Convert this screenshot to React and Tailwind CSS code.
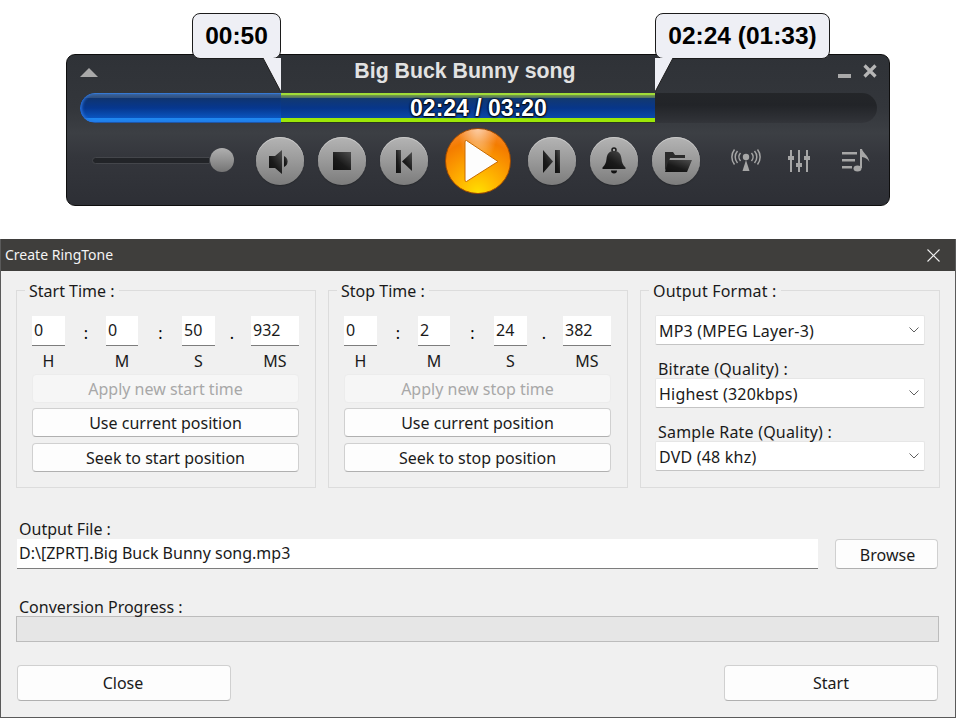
const Glyph = ({ children, size = 48 }) => (
  <svg width={size} height={size} viewBox={`0 0 ${size} ${size}`} className="block">
    <defs>
      <linearGradient id="gl" x1="0.9" y1="0" x2="0.1" y2="1">
        <stop offset="0" stopColor="#4a4a4a" />
        <stop offset="0.6" stopColor="#1a1a1a" />
        <stop offset="1" stopColor="#111111" />
      </linearGradient>
    </defs>
    {children}
  </svg>
);

const RoundButton = ({ children }) => (
  <div className="h-12 w-12 shrink-0 rounded-full bg-[linear-gradient(#b4b4b4,#9c9c9c_45%,#7c7c7c)] shadow-[inset_0_1px_0_#c8c8c8,0_1px_1px_#26282c]">
    <Glyph>{children}</Glyph>
  </div>
);

const Tooltip = ({ children, width, side }) => (
  <div className={`relative h-[46px] ${width} rounded-lg border border-[#1c1c1c] bg-[#eeeff5] flex items-center justify-center font-['Liberation_Sans'] font-bold text-[24.5px] text-black`}>
    {children}
    {side === "left" ? (
      <svg width="18" height="35" viewBox="0 0 18 35" className="absolute right-[-1px] top-[44px]">
        <path d="M0 0 L18 34 L18 0 Z" fill="#eeeff5" />
        <path d="M0 0 L18 34" fill="none" stroke="#1c1c1c" strokeWidth="1" />
      </svg>
    ) : (
      <svg width="18" height="35" viewBox="0 0 18 35" className="absolute left-[-1px] top-[44px]">
        <path d="M18 0 L0 34 L0 0 Z" fill="#eeeff5" />
        <path d="M18 0 L0 34" fill="none" stroke="#1c1c1c" strokeWidth="1" />
      </svg>
    )}
  </div>
);

const Player = () => (
  <div className="relative ml-[66px] mt-[54px] h-[152px] w-[824px] rounded-[9px] border border-[#0e0e0e] bg-[linear-gradient(#2f3237,#33363b_35%,#3c3f44_52%,#34363c_68%,#2d2f35)] px-[13px]">
    <div className="absolute left-[125px] top-[-42px]">
      <Tooltip width="w-[89px]" side="left">00:50</Tooltip>
    </div>
    <div className="absolute left-[588px] top-[-42px]">
      <Tooltip width="w-[175px]" side="right">02:24 (01:33)</Tooltip>
    </div>

    <div className="flex h-[38px] items-center justify-between">
      <div className="mt-[-4px] h-0 w-0 border-x-[9px] border-b-[9px] border-x-transparent border-b-[#a9a9a9]" />
      <div className="mr-[6px] mt-[-4px] font-['Liberation_Sans'] text-[21.3px] font-bold text-[#e2e2e2]">Big Buck Bunny song</div>
      <div className="mr-[-1px] mt-[-7px] flex items-end gap-[12px]">
        <div className="h-[4px] w-[13px] bg-[#a9a9a9]" />
        <svg width="14" height="14" viewBox="0 0 14 14" className="block">
          <path d="M1.5 1.5 L12.5 12.5 M12.5 1.5 L1.5 12.5" stroke="#b6b6b6" strokeWidth="3.2" />
        </svg>
      </div>
    </div>

    <div className="relative flex h-[30px] w-[797px] overflow-hidden rounded-full bg-[linear-gradient(#242629,#222428_40%,#2e3035_85%,#33353a)]">
      <div className="h-full w-[201px] rounded-l-full bg-[linear-gradient(#3f7fd0_1px,#3b6398_1px,#2d4e80_5px,#0f346f_5px,#06378f_15px,#0a55c0_25px,#2088f0_25px,#1f80ee_29px,#1a4a90_29px)] shadow-[inset_2px_0_3px_#2a70d8]" />
      <div className="h-full w-[374px] bg-[linear-gradient(#a0dc38_2px,#7a9f45_2px,#4a6c64_5px,#13396f_5px,#07368a_15px,#0a49a8_25px,#9ce808_25px,#9ce808_29px,#2a3a20_29px)]" />
      <div className="absolute inset-0 flex items-center justify-center font-['Liberation_Sans'] text-[23px] font-bold text-white [text-shadow:0_0_2px_#000,0_0_2px_#000,0_1px_2px_#000]">
        02:24 / 03:20
      </div>
    </div>

    <div className="flex h-[82px] items-center pb-[6px] pl-[12px]">
      <div className="mt-[-2px] flex w-[142px] shrink-0 items-center">
        <div className="h-[7px] w-[120px] rounded-l-full border border-[#44464b] bg-[#222428]" />
        <div className="h-6 w-6 rounded-full bg-[linear-gradient(#b0b0b0,#757575)]" />
      </div>
      <div className="ml-[22px] flex items-center gap-[14px]">
        <RoundButton>
          <path d="M13 19h6l7-6v24l-7-6h-6z" fill="url(#gl)" />
          <path d="M28 19a6 6 0 0 1 0 11z" fill="url(#gl)" />
        </RoundButton>
        <RoundButton>
          <rect x="15" y="15" width="18" height="18" fill="url(#gl)" />
        </RoundButton>
        <RoundButton>
          <rect x="16" y="13" width="5" height="23" fill="url(#gl)" />
          <path d="M32 15v19L22 24.5z" fill="url(#gl)" />
        </RoundButton>
      </div>
      <div className="mx-[17px] h-[66px] w-[66px] shrink-0 rounded-full border border-[#a34c00] bg-[radial-gradient(ellipse_at_50%_-10%,rgba(255,255,255,0.65),rgba(255,255,255,0)_45%),radial-gradient(circle_at_50%_100%,#ffe000,#ffb400_30%,#f98e00_58%,#f47c00_72%,#f98a30_92%,#e87000)]">
        <svg width="64" height="64" viewBox="0 0 64 64" className="block">
          <path d="M20.5 11.500 L52 32.500 L20.500 52.500 Q19 53 19 51 V13 Q19 11 20.500 11.500 Z" fill="#fdfdfd" stroke="#c96a00" strokeWidth="1" />
        </svg>
      </div>
      <div className="flex items-center gap-[14px]">
        <RoundButton>
          <path d="M15 13v23l10-11.500z" fill="url(#gl)" />
          <rect x="27" y="13" width="5" height="23" fill="url(#gl)" />
        </RoundButton>
        <RoundButton>
          <circle cx="24" cy="13" r="2" fill="none" stroke="#1a1a1a" strokeWidth="1.500" />
          <path d="M24 14c-5 0-7 3-7.500 8-.4 4-1.500 6-4 8.500v1.500h23v-1.500c-2.500-2.500-3.600-4.500-4-8.500-.5-5-2.500-8-7.500-8z" fill="url(#gl)" />
          <path d="M21 33.500h6a3 3 0 0 1-6 0z" fill="#111111" />
        </RoundButton>
        <RoundButton>
          <path d="M13 33V15h8l2 3h10v3H18l-2.500 10z" fill="#2b2b2b" />
          <path d="M16.500 23H40l-5 12H13z" fill="url(#gl)" />
        </RoundButton>
      </div>
      <div className="ml-[30px] flex items-center text-[#a6a6a6]">
        <svg width="32" height="24" viewBox="0 0 32 24" fill="none" stroke="currentColor" className="block">
          <circle cx="16" cy="8" r="3.200" fill="currentColor" stroke="none" />
          <path d="M16 11l3.500 11h-7z" fill="currentColor" stroke="none" />
          <path d="M10.500 4a6 6 0 0 0 0 8M21.500 4a6 6 0 0 1 0 8M7.500 2a9 9 0 0 0 0 12M24.500 2a9 9 0 0 1 0 12M4.500 .5a12 12 0 0 0 0 15M27.500 .5a12 12 0 0 1 0 15" strokeWidth="1.500" />
        </svg>
        <svg width="22" height="22" viewBox="0 0 22 22" fill="currentColor" className="ml-[26px] block">
          <rect x="2" y="0" width="2" height="22" />
          <rect x="10" y="0" width="2" height="22" />
          <rect x="18" y="0" width="2" height="22" />
          <rect x="0" y="6" width="6" height="4" />
          <rect x="8" y="13" width="6" height="4" />
          <rect x="16" y="6" width="6" height="4" />
        </svg>
        <svg width="28" height="24" viewBox="0 0 28 24" fill="currentColor" className="ml-[32px] block">
          <rect x="0" y="3" width="15" height="2.500" />
          <rect x="0" y="10" width="13" height="2.500" />
          <rect x="0" y="17" width="10" height="2.500" />
          <ellipse cx="15.500" cy="19.500" rx="4" ry="3" />
          <rect x="18" y="0" width="2" height="19" />
          <path d="M20 0c1 4 6 6 7.500 13-2-3.500-4.500-4.500-7.500-5z" />
        </svg>
      </div>
    </div>
  </div>
);

const Field = ({ w, children }) => (
  <div className={`${w} flex h-[30px] shrink-0 items-center border-b border-b-[#7d7d7d] bg-white pb-[2px] pl-[2px] text-[#1a1a1a]`}>{children}</div>
);

const Sep = ({ w, children }) => (
  <div className={`${w} shrink-0 pl-px pt-[4px] text-center`}>{children}</div>
);

const Btn = ({ children, className = "", disabled }) => (
  <div
    className={`flex items-center justify-center rounded-[4px] border ${
      disabled ? "border-[#ececec] bg-[#f6f6f6] text-[#a8a8a8]" : "border-[#d0d0d0] border-b-[#b0b0b0] bg-[#fdfdfd] text-[#1a1a1a]"
    } ${className}`}
  >
    {children}
  </div>
);

const TimeGroup = ({ title, values, apply, seek }) => (
  <fieldset className="w-[300px] border border-[#dcdcdc] px-[15px] pb-[15px] pt-[14px]">
    <legend className="ml-[-7px] px-[4px] pt-px text-[#1a1a1a]">{title}</legend>
    <div className="flex items-center">
      <Field w="w-[33px]">{values[0]}</Field>
      <Sep w="w-[41px]">:</Sep>
      <Field w="w-[32px]">{values[1]}</Field>
      <Sep w="w-[44px]">:</Sep>
      <Field w="w-[33px]">{values[2]}</Field>
      <Sep w="w-[36px] pr-[3px]">.</Sep>
      <Field w="w-[48px]">{values[3]}</Field>
    </div>
    <div className="flex h-[28px] items-center pt-px text-[#1a1a1a]">
      <div className="w-[33px] text-center">H</div>
      <div className="ml-[41px] w-[32px] text-center">M</div>
      <div className="ml-[44px] w-[33px] text-center">S</div>
      <div className="ml-[36px] w-[48px] text-center">MS</div>
    </div>
    <div className="flex w-[267px] flex-col">
      <Btn disabled className="h-[29px]">{apply}</Btn>
      <Btn className="mt-[5px] h-[29px]">Use current position</Btn>
      <Btn className="mt-[6px] h-[29px]">{seek}</Btn>
    </div>
  </fieldset>
);

const Select = ({ children }) => (
  <div className="flex h-[30px] items-center justify-between rounded-[2px] border border-[#e6e6e6] border-b-[#c4c4c4] bg-white pl-[3px] pr-[5px] text-[#1a1a1a]">
    <span className="pt-[2px]">{children}</span>
    <svg width="10" height="6" viewBox="0 0 10 6" fill="none" stroke="#606060" className="block">
      <path d="M.5 .5 L5 5 L9.500 .5" />
    </svg>
  </div>
);

const Dialog = () => (
  <div className="mt-[33px] h-[479px] w-[956px] border-x border-b border-[#5a5a5a] bg-[#f0f0f0] font-['Noto_Sans',sans-serif] text-[16px] leading-[22px]">
    <div className="flex h-[32px] items-center justify-between bg-[#3f3e3c] pl-[4px] pr-[15px] text-[14px] text-[#f4f4f4]">
      <span>Create RingTone</span>
      <svg width="13" height="13" viewBox="0 0 13 13" stroke="#f0f0f0" strokeWidth="1.100" className="block">
        <path d="M.5 .5 L12.500 12.500 M12.500 .5 L.5 12.500" />
      </svg>
    </div>
    <div className="px-[15px] pt-[8px]">
      <div className="flex gap-[12px]">
        <TimeGroup title="Start Time :" values={["0", "0", "50", "932"]} apply="Apply new start time" seek="Seek to start position" />
        <TimeGroup title="Stop Time :" values={["0", "2", "24", "382"]} apply="Apply new stop time" seek="Seek to stop position" />
        <fieldset className="w-[300px] border border-[#dcdcdc] px-[14px] pb-[16px] pt-[13px] tracking-[0.2px]">
          <legend className="ml-[-6px] px-[4px] pt-px text-[#1a1a1a]">Output Format :</legend>
          <Select>MP3 (MPEG Layer-3)</Select>
          <div className="h-[33px] pl-[3px] pt-[14px] leading-[20px] text-[#1a1a1a]">Bitrate (Quality) :</div>
          <Select>Highest (320kbps)</Select>
          <div className="h-[33px] pl-[3px] pt-[14px] leading-[20px] text-[#1a1a1a]">Sample Rate (Quality) :</div>
          <Select>DVD (48 khz)</Select>
        </fieldset>
      </div>

      <div className="mt-[30px] h-[21px] pl-[3px] text-[#1a1a1a]">Output File :</div>
      <div className="flex pl-[1px]">
        <div className="flex h-[30px] w-[801px] items-center border-b border-b-[#7d7d7d] bg-white pb-[2px] pl-[2px] text-[#1a1a1a]">D:\[ZPRT].Big Buck Bunny song.mp3</div>
        <Btn className="ml-[17px] h-[30px] w-[103px] pl-[2px] pt-[2px]">Browse</Btn>
      </div>

      <div className="mt-[27px] h-[20px] pl-[3px] text-[#1a1a1a]">Conversion Progress :</div>
      <div className="h-[26px] w-[923px] border border-[#bcbcbc] bg-[#e6e6e6]" />

      <div className="mt-[23px] flex justify-between pl-[1px] pr-[2px]">
        <Btn className="h-[36px] w-[214px] pr-[2px]">Close</Btn>
        <Btn className="h-[36px] w-[214px]">Start</Btn>
      </div>
    </div>
  </div>
);

export default function App() {
  return (
    <div className="h-[718px] w-[956px] overflow-hidden bg-white [display:flow-root]">
      <Player />
      <Dialog />
    </div>
  );
}
